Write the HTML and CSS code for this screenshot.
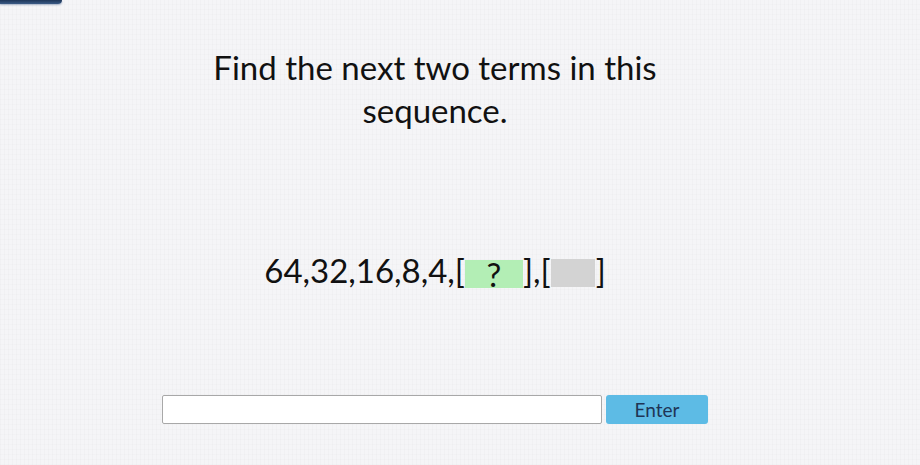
FILE: index.html
```html
<!DOCTYPE html>
<html>
<head>
<meta charset="utf-8">
<link rel="stylesheet" href="styles.css">
</head>
<body>
<div class="tab"></div>
<main class="page">
  <h1 class="title">Find the next two terms in this<br>sequence.</h1>
  <p class="seq">64,32,16,8,4,[<span class="blank green">?</span>],[<span class="blank grey"></span>]</p>
  <div class="answer">
    <input class="field" type="text">
    <button class="enter">Enter</button>
  </div>
</main>
</body>
</html>
```

FILE: styles.css
```css
html, body {
  margin: 0;
  padding: 0;
}
body {
  width: 920px;
  height: 465px;
  overflow: hidden;
  background-color: #f5f5f7;
  background-image:
    repeating-linear-gradient(90deg, rgba(0,0,0,0.015) 0 1px, transparent 1px 4px),
    repeating-linear-gradient(0deg, rgba(0,0,0,0.012) 0 1px, transparent 1px 5px);
  font-family: Lato, "Open Sans", sans-serif;
  color: #111;
}
.tab {
  width: 62px;
  height: 4px;
  background: linear-gradient(#1d3557, #3b5b86);
  border-bottom-right-radius: 4px;
  box-shadow: 0 1px 2px rgba(40,70,120,0.4);
}
.page {
  width: 870px;
  display: flex;
  flex-direction: column;
  align-items: center;
}
.title {
  margin: 42px 0 0;
  font-size: 33px;
  line-height: 43px;
  font-weight: 400;
  text-align: center;
}
.seq {
  margin: 118px 0 0;
  font-size: 33px;
  line-height: 40px;
}
.blank {
  display: inline-block;
  vertical-align: -4px;
  height: 28px;
  line-height: 28px;
  text-align: center;
}
.green {
  width: 58px;
  background: #b3eeb5;
}
.grey {
  width: 44px;
  margin-right: 1px;
  background: #d3d3d3;
}
.answer {
  margin-top: 105px;
  display: flex;
  gap: 4px;
}
.field {
  box-sizing: border-box;
  width: 440px;
  height: 29px;
  margin: 0;
  border: 1px solid #a8a8a8;
  border-radius: 2px;
  background: #fff;
}
.enter {
  box-sizing: border-box;
  width: 102px;
  height: 29px;
  border: none;
  border-radius: 3px;
  background: #5dbbe5;
  color: #1f3556;
  font-family: Lato, sans-serif;
  font-size: 19px;
  padding: 0;
}
```
